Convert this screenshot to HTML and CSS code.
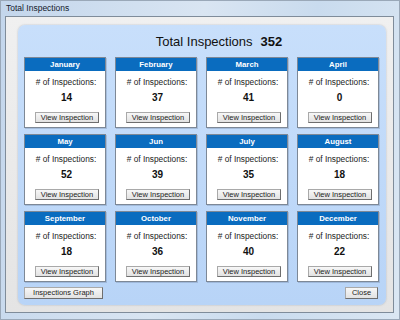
FILE: index.html
```html
<!DOCTYPE html>
<html lang="en">
<head>
	<meta charset="UTF-8">
	<title>Total Inspections</title>
	<link rel="stylesheet" href="styles.css">
</head>
<body>
	<div class="window">
		<div class="titlebar">Total Inspections</div>
		<div class="client">
			<div class="panel">
				<div class="heading"><span>Total Inspections</span><b>352</b></div>
				<ul class="months">
					<li><h3>January</h3><p>#&nbsp;of Inspections:</p><strong>14</strong><a href="javascript:;" class="btn">View Inspection</a></li>
					<li><h3>February</h3><p>#&nbsp;of Inspections:</p><strong>37</strong><a href="javascript:;" class="btn">View Inspection</a></li>
					<li><h3>March</h3><p>#&nbsp;of Inspections:</p><strong>41</strong><a href="javascript:;" class="btn">View Inspection</a></li>
					<li><h3>April</h3><p>#&nbsp;of Inspections:</p><strong>0</strong><a href="javascript:;" class="btn">View Inspection</a></li>
					<li><h3>May</h3><p>#&nbsp;of Inspections:</p><strong>52</strong><a href="javascript:;" class="btn">View Inspection</a></li>
					<li><h3>Jun</h3><p>#&nbsp;of Inspections:</p><strong>39</strong><a href="javascript:;" class="btn">View Inspection</a></li>
					<li><h3>July</h3><p>#&nbsp;of Inspections:</p><strong>35</strong><a href="javascript:;" class="btn">View Inspection</a></li>
					<li><h3>August</h3><p>#&nbsp;of Inspections:</p><strong>18</strong><a href="javascript:;" class="btn">View Inspection</a></li>
					<li><h3>September</h3><p>#&nbsp;of Inspections:</p><strong>18</strong><a href="javascript:;" class="btn">View Inspection</a></li>
					<li><h3>October</h3><p>#&nbsp;of Inspections:</p><strong>36</strong><a href="javascript:;" class="btn">View Inspection</a></li>
					<li><h3>November</h3><p>#&nbsp;of Inspections:</p><strong>40</strong><a href="javascript:;" class="btn">View Inspection</a></li>
					<li><h3>December</h3><p>#&nbsp;of Inspections:</p><strong>22</strong><a href="javascript:;" class="btn">View Inspection</a></li>
				</ul>
				<div class="footer">
					<a href="javascript:;" class="btn graph">Inspections Graph</a>
					<a href="javascript:;" class="btn close">Close</a>
				</div>
			</div>
		</div>
	</div>
</body>
</html>
```

FILE: styles.css
```css
body,div,ul,li,h3,p {
	margin:0;
	padding:0;
}
ul {
	list-style: none;
}
a {
	text-decoration: none;
}
body {
	font-family: "Liberation Sans", Arial, sans-serif;
	background: #fff;
}
.window {
	width:400px;
	height:320px;
	box-sizing: border-box;
	padding:0 5px 6px 4px;
	display: flex;
	flex-direction: column;
	background: linear-gradient(100deg, #c3d6ec 0%, #d9e5f2 45%, #c9dbee 70%, #dbe7f3 100%);
	border:1px solid #9aa8b8;
}
.titlebar {
	height:15px;
	line-height: 14px;
	padding-left:1px;
	font-size: 8.5px;
	color:#14202c;
}
.client {
	flex:1;
	display: flex;
	padding:8px 9px 7px 12px;
	background: linear-gradient(#f0f0f0, #e4e4e4);
	border:1px solid #7f8c9a;
}
.panel {
	flex:1;
	display: flex;
	flex-direction: column;
	padding:0 7px 0 6px;
	background: linear-gradient(#c8dffb, #b8d4f7);
	border-radius: 7px;
	box-shadow: 0 0 2px rgba(60,80,110,.35);
}
.heading {
	height:32px;
	display: flex;
	align-items: center;
	justify-content: center;
	padding-left:35px;
	font-size: 13px;
	color:#111;
}
.heading b {
	margin-left:8px;
}
.months {
	display: grid;
	grid-template-columns: repeat(4, 82px);
	grid-auto-rows: 71px;
	column-gap: 9px;
	row-gap: 6px;
}
.months li {
	box-sizing: border-box;
	display: flex;
	flex-direction: column;
	align-items: center;
	background: #fff;
	border:1px solid #7d8896;
	box-shadow: 1px 1px 0 rgba(80,100,130,.25);
}
.months h3 {
	align-self: stretch;
	height:13px;
	line-height: 13px;
	text-align: center;
	font-size: 7.8px;
	color:#fff;
	background: #0a6cbf;
}
.months p {
	margin-top:6px;
	line-height: 11px;
	font-size: 8.3px;
	color:#222;
	padding-left:2px;
}
.months strong {
	margin-top:3px;
	line-height: 14px;
	font-size: 10px;
	color:#111;
	padding-left:3px;
}
.btn {
	display: block;
	box-sizing: border-box;
	height:11px;
	line-height: 9px;
	text-align: center;
	font-size: 7.5px;
	color:#222;
	background: linear-gradient(#f7f7f7, #e2e2e2);
	border:1px solid #a9a9a9;
	border-right-color: #6e6e6e;
	border-bottom-color: #6e6e6e;
}
.months .btn {
	width:64px;
	margin:7px 0 0 4px;
}
.footer {
	display: flex;
	justify-content: space-between;
	margin-top:5px;
	padding-right:1px;
}
.graph {
	width:79px;
	height:12px;
	line-height: 10px;
}
.close {
	width:33px;
	height:12px;
	line-height: 10px;
}
```
